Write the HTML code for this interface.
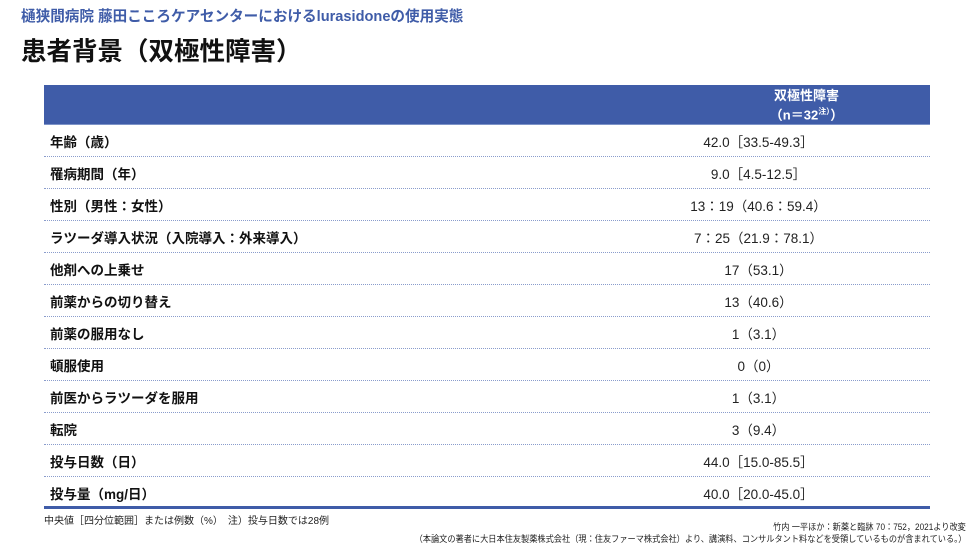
<!DOCTYPE html>
<html><head><meta charset="utf-8"><style>
body{margin:0;width:980px;height:551px;background:#fff;font-family:"Liberation Sans","Noto Sans CJK JP",sans-serif;position:relative;overflow:hidden}
.sub{position:absolute;left:21px;top:5px;font-size:14.6px;font-weight:bold;color:#3f5ca8;white-space:nowrap}
.title{position:absolute;left:21px;top:31px;font-size:25.5px;font-weight:bold;color:#111;white-space:nowrap}
.hdr{position:absolute;left:44px;top:85px;width:886px;height:39px;background:#3f5ca8;border-bottom:1px solid #7d93c8}
.hdr div{position:absolute;left:660px;width:205px;text-align:center;color:#fff;font-weight:bold;font-size:13px;line-height:16px;top:3px}
.row{position:absolute;left:44px;width:886px;height:31px;border-bottom:1px dotted #8a9ccc}
.row .l{position:absolute;left:6px;top:6px;font-size:13.5px;font-weight:bold;color:#111;white-space:nowrap}
.row .r{position:absolute;left:612px;width:205px;text-align:center;top:6px;font-size:13.5px;color:#222;white-space:nowrap}
.last{border-bottom:3px solid #3f5ca8}
.fn{position:absolute;font-size:10px;color:#222;white-space:nowrap}
.cond{transform-origin:right top;transform:scaleX(0.91)}
</style></head><body>
<div class="sub">樋狭間病院 藤田こころケアセンターにおけるlurasidoneの使用実態</div>
<div class="title">患者背景（双極性障害）</div>
<div class="hdr"><div>双極性障害<br>（n＝32<sup style="font-size:8px">注）</sup>）</div></div>
<div class="row" style="top:125px"><span class="l">年齢（歳）</span><span class="r">42.0［33.5-49.3］</span></div>
<div class="row" style="top:157px"><span class="l">罹病期間（年）</span><span class="r">9.0［4.5-12.5］</span></div>
<div class="row" style="top:189px"><span class="l">性別（男性：女性）</span><span class="r">13：19（40.6：59.4）</span></div>
<div class="row" style="top:221px"><span class="l">ラツーダ導入状況（入院導入：外来導入）</span><span class="r">7：25（21.9：78.1）</span></div>
<div class="row" style="top:253px"><span class="l">他剤への上乗せ</span><span class="r">17（53.1）</span></div>
<div class="row" style="top:285px"><span class="l">前薬からの切り替え</span><span class="r">13（40.6）</span></div>
<div class="row" style="top:317px"><span class="l">前薬の服用なし</span><span class="r">1（3.1）</span></div>
<div class="row" style="top:349px"><span class="l">頓服使用</span><span class="r">0（0）</span></div>
<div class="row" style="top:381px"><span class="l">前医からラツーダを服用</span><span class="r">1（3.1）</span></div>
<div class="row" style="top:413px"><span class="l">転院</span><span class="r">3（9.4）</span></div>
<div class="row" style="top:445px"><span class="l">投与日数（日）</span><span class="r">44.0［15.0-85.5］</span></div>
<div class="row last" style="top:477px;height:29px"><span class="l">投与量（mg/日）</span><span class="r">40.0［20.0-45.0］</span></div>
<div class="fn" style="left:44px;top:512px">中央値［四分位範囲］または例数（%）　注）投与日数では28例</div>
<div class="fn cond" style="right:14px;top:520px;font-size:9px">竹内 一平ほか：新薬と臨牀 70：752，2021より改変</div>
<div class="fn cond" style="right:14px;top:532px;font-size:9px">（本論文の著者に大日本住友製薬株式会社（現：住友ファーマ株式会社）より、講演料、コンサルタント料などを受領しているものが含まれている。）</div>
</body></html>
